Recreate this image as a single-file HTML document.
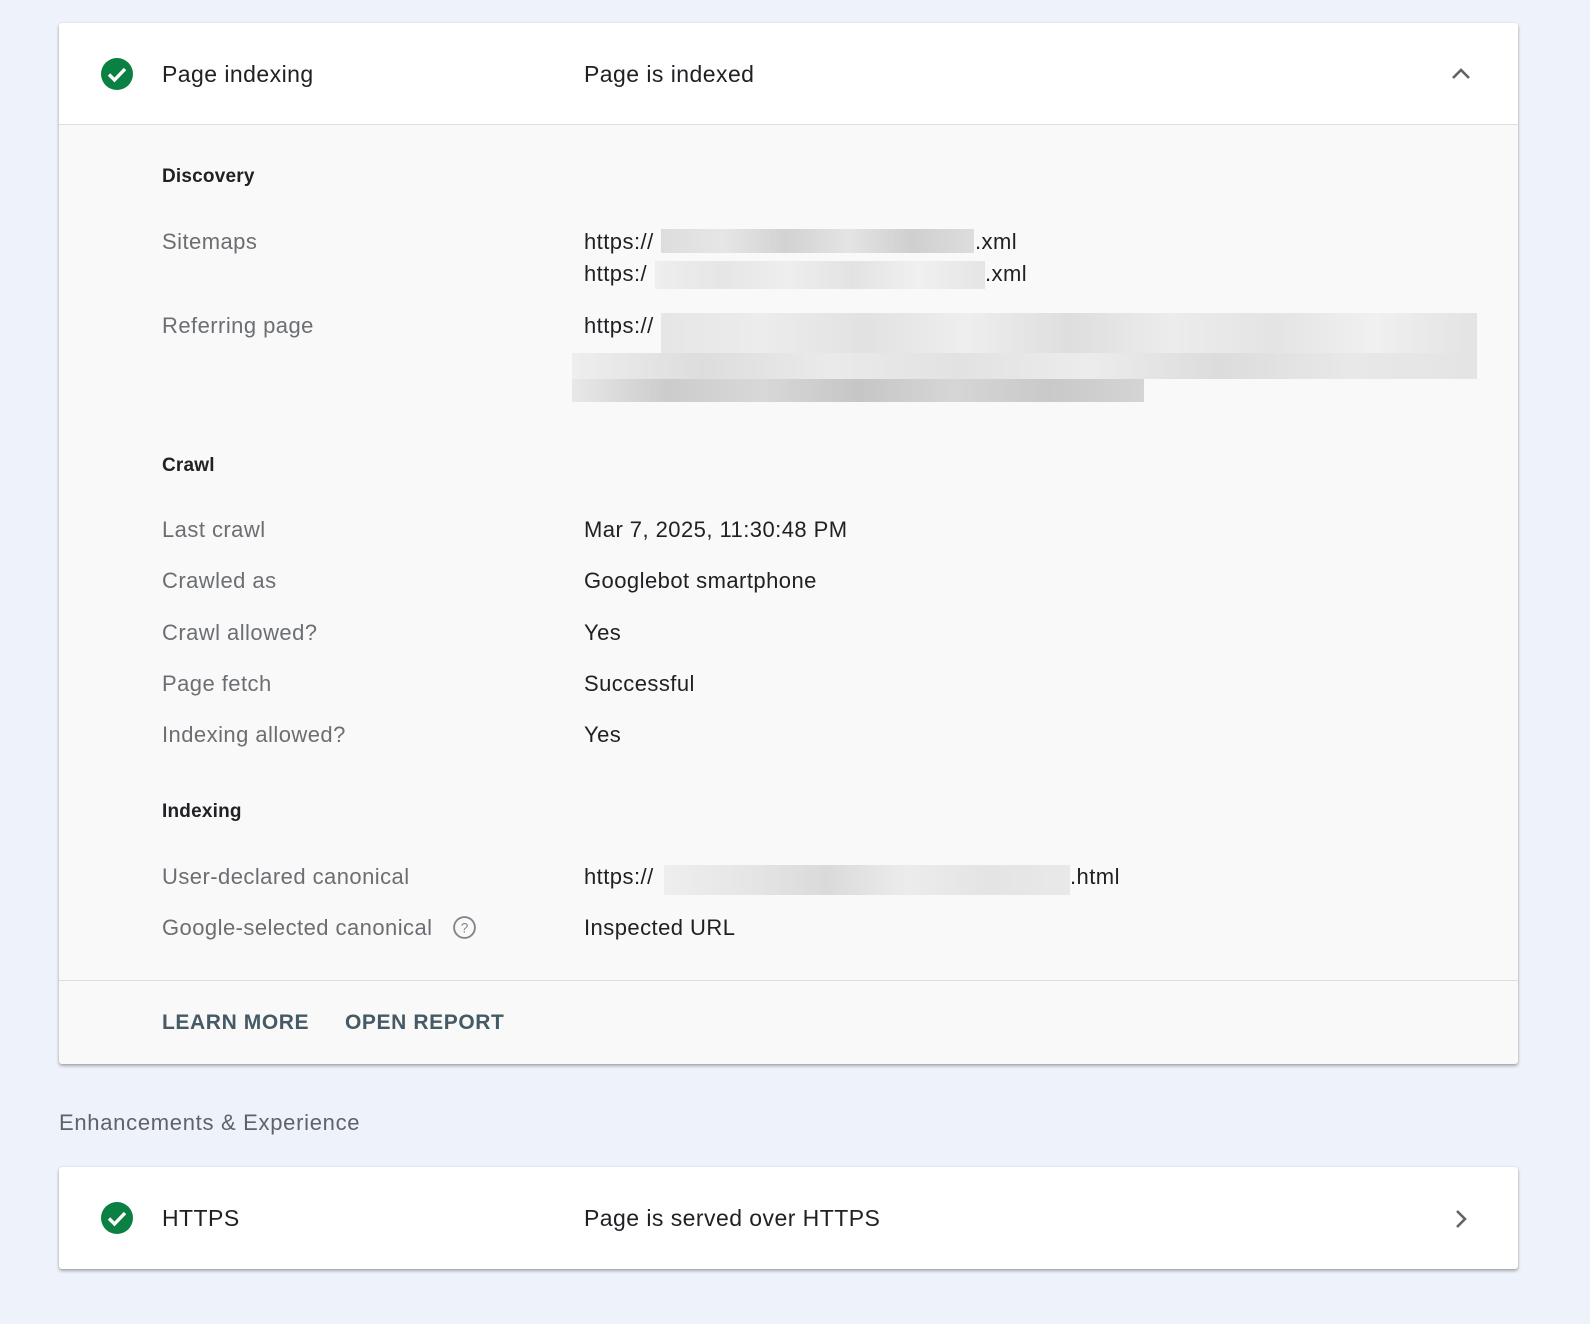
<!DOCTYPE html>
<html><head><meta charset="utf-8"><style>
*{margin:0;padding:0;box-sizing:border-box}
body{width:1590px;height:1324px;background:#eef2fa;font-family:"Liberation Sans",Roboto,sans-serif;position:relative;overflow:hidden;color:#202124}
.card{position:absolute;left:59px;width:1459px;background:#fff;border-radius:3px;box-shadow:0 2px 3px rgba(0,0,0,.3),0 0 2px rgba(0,0,0,.1)}
.t{position:absolute;white-space:nowrap;font-size:22px;line-height:26px;letter-spacing:0.45px}
.l{color:#6b6e72;left:162px}
.v{left:584px;color:#202124}
.h{font-weight:bold;font-size:19px;left:162px;color:#202124;letter-spacing:0.2px}
.b{position:absolute;font-size:21px;font-weight:bold;letter-spacing:0.6px;color:#455a64;top:1011px}
.blur{position:absolute;background:#ddd}
</style></head><body>
<div class="card" style="top:23px;height:1041px;background:#f9f9f9">
 <div style="position:absolute;left:0;top:0;right:0;height:102px;background:#fff;border-bottom:1px solid #ddd;border-radius:3px 3px 0 0"></div>
 <div style="position:absolute;left:0;right:0;top:957px;border-top:1px solid #ddd"></div>
</div>
<svg style="position:absolute;left:100px;top:57px" width="34" height="34" viewBox="0 0 34 34"><circle cx="17" cy="17" r="16" fill="#0b8043"/><path d="M9 17.5l5.5 5.5L25 12" stroke="#fff" stroke-width="3.4" fill="none"/></svg>
<div class="t" style="left:162px;top:61px;font-size:23px">Page indexing</div>
<div class="t v" style="top:61px;font-size:23px">Page is indexed</div>
<svg style="position:absolute;left:1450px;top:64px" width="22" height="20" viewBox="0 0 22 20"><path d="M3 14l8-8 8 8" stroke="#5f6368" stroke-width="2.6" fill="none"/></svg>

<div class="t h" style="top:164px">Discovery</div>
<div class="t l" style="top:229px">Sitemaps</div>
<div class="t v" style="top:229px">https://</div>
<div class="blur" style="left:661px;top:229px;width:313px;height:24px;background:linear-gradient(90deg,#ddd,#e6e6e6,#d2d2d2,#e4e4e4,#cfcfcf,#ddd)"></div>
<div class="t" style="left:975px;top:229px">.xml</div>
<div class="t v" style="top:261px">https:/</div>
<div class="blur" style="left:655px;top:261px;width:330px;height:28px;background:linear-gradient(90deg,#eee,#e6e6e6,#eee,#e3e3e3,#f0f0f0,#e5e5e5)"></div>
<div class="t" style="left:985px;top:261px">.xml</div>
<div class="t l" style="top:313px">Referring page</div>
<div class="t v" style="top:313px">https://</div>
<div class="blur" style="left:661px;top:313px;width:816px;height:40px;background:linear-gradient(90deg,#e6e6e6,#ececec,#e2e2e2,#eeeeee,#dedede,#ececec,#e4e4e4,#f0f0f0,#e3e3e3)"></div>
<div class="blur" style="left:572px;top:353px;width:905px;height:26px;background:linear-gradient(90deg,#eee,#ddd,#eaeaea,#e2e2e2,#ececec,#dcdcdc,#e8e8e8,#e4e4e4)"></div>
<div class="blur" style="left:572px;top:379px;width:572px;height:23px;background:linear-gradient(90deg,#e8e8e8,#cccccc,#d8d8d8,#c6c6c6,#d6d6d6,#c9c9c9,#d4d4d4)"></div>

<div class="t h" style="top:453px">Crawl</div>
<div class="t l" style="top:517px">Last crawl</div><div class="t v" style="top:517px">Mar 7, 2025, 11:30:48 PM</div>
<div class="t l" style="top:568px">Crawled as</div><div class="t v" style="top:568px">Googlebot smartphone</div>
<div class="t l" style="top:620px">Crawl allowed?</div><div class="t v" style="top:620px">Yes</div>
<div class="t l" style="top:671px">Page fetch</div><div class="t v" style="top:671px">Successful</div>
<div class="t l" style="top:722px">Indexing allowed?</div><div class="t v" style="top:722px">Yes</div>

<div class="t h" style="top:799px">Indexing</div>
<div class="t l" style="top:864px">User-declared canonical</div>
<div class="t v" style="top:864px">https://</div>
<div class="blur" style="left:664px;top:865px;width:406px;height:30px;background:linear-gradient(90deg,#eee,#e6e6e6,#dadada,#ececec,#e4e4e4,#e9e9e9)"></div>
<div class="t" style="left:1070px;top:864px">.html</div>
<div class="t l" style="top:915px">Google-selected canonical</div>
<svg style="position:absolute;left:452px;top:915px" width="25" height="25" viewBox="0 0 24 24"><circle cx="12" cy="12" r="10" stroke="#80868b" stroke-width="1.8" fill="none"/><text x="12" y="17" font-size="13" text-anchor="middle" fill="#80868b" font-family="Liberation Sans">?</text></svg>
<div class="t v" style="top:915px">Inspected URL</div>

<div class="b" style="left:162px">LEARN MORE</div>
<div class="b" style="left:345px">OPEN REPORT</div>

<div class="t" style="left:59px;top:1110px;color:#5f6368;letter-spacing:0.7px">Enhancements &amp; Experience</div>

<div class="card" style="top:1167px;height:102px"></div>
<svg style="position:absolute;left:100px;top:1201px" width="34" height="34" viewBox="0 0 34 34"><circle cx="17" cy="17" r="16" fill="#0b8043"/><path d="M9 17.5l5.5 5.5L25 12" stroke="#fff" stroke-width="3.4" fill="none"/></svg>
<div class="t" style="left:162px;top:1205px;font-size:23px">HTTPS</div>
<div class="t v" style="top:1205px;font-size:23px">Page is served over HTTPS</div>
<svg style="position:absolute;left:1450px;top:1208px" width="20" height="22" viewBox="0 0 20 22"><path d="M7 3l8 8-8 8" stroke="#5f6368" stroke-width="2.6" fill="none"/></svg>
</body></html>
